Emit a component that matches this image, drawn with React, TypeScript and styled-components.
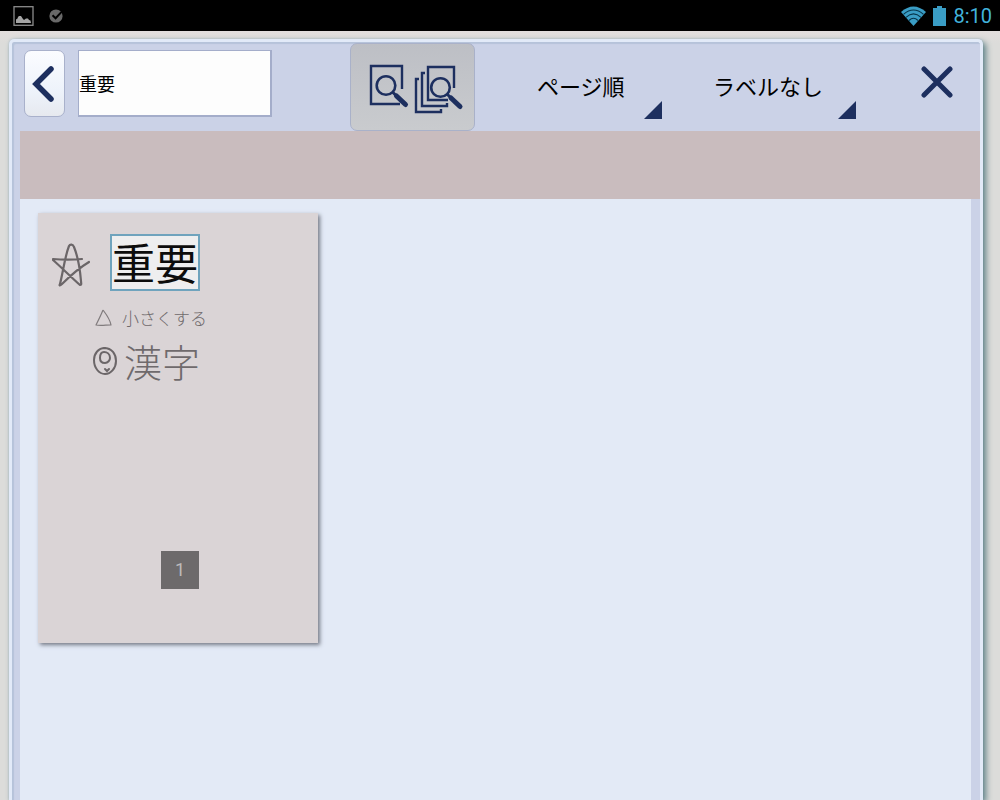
import React from "react";
import styled, { createGlobalStyle } from "styled-components";

const navy = "#1d2f5f";
const sans = `Roboto, "Noto Sans CJK JP", sans-serif`;

const GlobalStyle = createGlobalStyle`
  *, *::before, *::after { box-sizing: border-box; }
  body {
    margin: 0;
    background: #dcdcda;
    font-family: ${sans};
    color: #000;
  }
  button, input, select { font-family: inherit; color: inherit; margin: 0; }
`;

const Screen = styled.div`
  display: flex;
  flex-direction: column;
  min-height: 100vh;
  overflow: hidden;
`;

const StatusBar = styled.header`
  display: flex;
  align-items: center;
  justify-content: space-between;
  height: 31px;
  padding: 0 8px 0 13px;
  background: #000;
  color: #42b3dc;
`;

const StatusGroup = styled.div<{ $gap: number }>`
  display: flex;
  align-items: center;
  gap: ${(p) => p.$gap}px;
`;

const Clock = styled.time`
  font-size: 20px;
  line-height: 30px;
`;

const Desk = styled.main`
  flex: 1;
  display: flex;
  padding: 8px 17px 0 9px;
  background: linear-gradient(#e2dedd, #dcdcda 12px);
`;

const Frame = styled.section`
  flex: 1;
  min-width: 0;
  display: flex;
  flex-direction: column;
  border: solid #e2eaf8;
  border-width: 3px 3px 0 3px;
  border-radius: 5px 5px 0 0;
  background: #cbd2e7;
  box-shadow: 3px 3px 6px #5f8288, 0 0 2px #a9bccb, inset 2px 2px 1px #b6c3da;
`;

const Toolbar = styled.div`
  display: flex;
  align-items: flex-start;
  height: 89px;
  padding: 1px 23px 0 12px;
`;

const BackButton = styled.button`
  display: grid;
  place-items: center;
  width: 41px;
  height: 67px;
  margin: 7px 13px 0 0;
  padding: 0 4px 0 0;
  border: 1px solid #a9b1cb;
  border-radius: 7px;
  background: linear-gradient(#fbfcff, #eef3fb 60%, #e6e9ef);
`;

const SearchInput = styled.input`
  width: 194px;
  height: 67px;
  margin-top: 7px;
  padding: 0;
  border: 1px solid #a4adca;
  border-right-width: 2px;
  border-bottom-width: 2px;
  border-radius: 0;
  background: #fdfdfd;
  font-size: 18px;
  outline: none;
`;

const ScopeButton = styled.button`
  display: flex;
  align-items: center;
  justify-content: center;
  width: 125px;
  height: 88px;
  margin-left: 78px;
  padding: 2px 0 0 2px;
  border: 1px solid #a9b1c9;
  border-radius: 7px;
  background: linear-gradient(#bdbfc5, #c9cbce);
`;

const Picker = styled.label<{ $width: number; $gap: number }>`
  position: relative;
  width: ${(p) => p.$width}px;
  height: 76px;
  margin-left: ${(p) => p.$gap}px;

  &::after {
    content: "";
    position: absolute;
    right: 0;
    bottom: 0;
    width: 18px;
    height: 18px;
    background: ${navy};
    clip-path: polygon(100% 0, 100% 100%, 0 100%);
    pointer-events: none;
  }
`;

const PickerSelect = styled.select`
  appearance: none;
  width: 100%;
  height: 100%;
  padding: 13px 0 0 19px;
  border: 0;
  background: transparent;
  font-size: 22px;
  outline: none;
`;

const CloseButton = styled.button`
  margin: 19px 0 0 auto;
  padding: 4px;
  border: 0;
  background: transparent;
  line-height: 0;
`;

const LabelBand = styled.div`
  height: 68px;
  margin: 0 0 0 8px;
  background: #c9bcbe;
`;

const Results = styled.div`
  flex: 1;
  margin: 0 9px 0 8px;
  padding: 14px 18px;
  background: #e3eaf6;
`;

const PageCard = styled.article`
  position: relative;
  width: 280px;
  height: 430px;
  padding: 21px 14px;
  background: #dad4d6;
  box-shadow: 2px 2px 4px #757a86;
`;

const NoteLine = styled.div<{ $indent: number; $gap: number; $top: number }>`
  display: flex;
  align-items: center;
  gap: ${(p) => p.$gap}px;
  margin: ${(p) => p.$top}px 0 0 ${(p) => p.$indent}px;
`;

const Ink = styled.span<{ $size: number; $line: number }>`
  font-family: "Noto Sans CJK JP", sans-serif;
  font-weight: 300;
  font-size: ${(p) => p.$size}px;
  line-height: ${(p) => p.$line}px;
  color: #6f6a6c;
`;

const Match = styled.mark`
  display: block;
  width: 90px;
  height: 57px;
  border: 2px solid #6fa3bd;
  background: #eeeeef;
  color: #0c0c0c;
  font-family: "Noto Sans CJK JP", sans-serif;
  font-weight: 400;
  font-size: 43px;
  line-height: 51px;
  text-align: center;
  white-space: nowrap;
`;

const PageNumber = styled.span`
  position: absolute;
  left: 50%;
  bottom: 54px;
  width: 38px;
  margin-left: -17px;
  background: #6d6a6b;
  color: #bdbabb;
  font-size: 18px;
  line-height: 38px;
  text-align: center;
`;

export default function App() {
  return (
    <>
      <GlobalStyle />
      <Screen>
        <StatusBar>
          <StatusGroup $gap={15}>
            <svg width="21" height="20" viewBox="0 0 21 20" aria-hidden="true">
              <rect x="1" y=".7" width="19" height="18.6" fill="none" stroke="#8b8b8b" strokeWidth="1.3" />
              <path d="M3 17v-3.500l1.500-1 .5-1.500 1-1h2l2 3 1 1 2-1.500h2l1 1.500 1.500.5.5 2.500z" fill="#a5a5a5" />
            </svg>
            <svg width="14" height="14" viewBox="0 0 14 14" aria-hidden="true">
              <circle cx="7" cy="7" r="6.600" fill="#696969" />
              <path d="M3.500 6.300 6.600 9.300 12.800 2.600" fill="none" stroke="#000" strokeWidth="2" />
            </svg>
          </StatusGroup>
          <StatusGroup $gap={7}>
            <svg width="25" height="20" viewBox="0 0 25 20" aria-hidden="true">
              <path d="M0 6Q12.500-5 25 6L12.500 20z" fill="#3a9dc5" />
              <path d="M2.500 8.300Q12.500-.3 22.500 8.300M5 11.300Q12.500 4.500 20 11.300M8 14.500Q12.500 10 17 14.500" fill="none" stroke="#063449" strokeWidth="1.100" />
            </svg>
            <svg width="13" height="20" viewBox="0 0 13 20" aria-hidden="true">
              <path d="M4 0h5v2h4v18H0V2h4z" fill="#3a9dc5" />
            </svg>
            <Clock>8:10</Clock>
          </StatusGroup>
        </StatusBar>
        <Desk>
          <Frame>
            <Toolbar>
              <BackButton type="button" aria-label="戻る">
                <svg width="24" height="38" viewBox="0 0 24 38" aria-hidden="true">
                  <path d="M20 4 5 19l15 15" fill="none" stroke={navy} strokeWidth="5.500" strokeLinecap="round" />
                </svg>
              </BackButton>
              <SearchInput type="text" aria-label="検索" defaultValue="重要" />
              <ScopeButton type="button" aria-label="検索範囲">
                <svg width="102" height="52" viewBox="-2 0 102 52" fill="none" stroke={navy} aria-hidden="true">
                  <path d="M37 27V4H6v38h29" strokeWidth="2.400" />
                  <path d="M89 26V5H63v33h20M60 11h-3v33h25v-3M54 17h-3v33h25v-3" strokeWidth="2.400" />
                  <circle cx="21" cy="23.500" r="9.300" strokeWidth="2.600" />
                  <path d="m27.500 30 4 4" strokeWidth="3" />
                  <path d="m31.500 34 9 8.500" strokeWidth="5" strokeLinecap="round" />
                  <circle cx="75.500" cy="25.500" r="9.300" strokeWidth="2.600" />
                  <path d="m82 32 4 4" strokeWidth="3" />
                  <path d="m86 36 9 8.500" strokeWidth="5" strokeLinecap="round" />
                </svg>
              </ScopeButton>
              <Picker $width={144} $gap={43}>
                <PickerSelect aria-label="並べ替え">
                  <option>ページ順</option>
                </PickerSelect>
              </Picker>
              <Picker $width={162} $gap={32}>
                <PickerSelect aria-label="ラベル">
                  <option>ラベルなし</option>
                </PickerSelect>
              </Picker>
              <CloseButton type="button" aria-label="閉じる">
                <svg width="32" height="32" viewBox="0 0 32 32" aria-hidden="true">
                  <path d="m3 3 26 26M29 3 3 29" fill="none" stroke={navy} strokeWidth="5" strokeLinecap="round" />
                </svg>
              </CloseButton>
            </Toolbar>
            <LabelBand />
            <Results>
              <PageCard>
                <NoteLine $indent={0} $gap={20} $top={0}>
                  <svg width="38" height="50" viewBox="0 0 38 50" fill="none" stroke="#6b6668" strokeWidth="2.200" strokeLinecap="round" strokeLinejoin="round" aria-hidden="true">
                    <path d="M1 21c10 1 19 1 29 0M1 22c8 7 18 17 27 25 2 0 1-2 1-4-1-12-3-24-7-34-1-3-4-3-5-1C13 18 11 34 8 46c-1 2 0 2 2 0 7-7 17-16 27-22" />
                  </svg>
                  <Match>重要</Match>
                </NoteLine>
                <NoteLine $indent={43} $gap={10} $top={11}>
                  <svg width="17" height="18" viewBox="0 0 17 18" fill="none" stroke="#807b7d" strokeWidth="1.200" strokeLinejoin="round" aria-hidden="true">
                    <path d="M8 1C6 6 3 12 1 16c4 1 10 0 15 0C15 10 11 5 8 1" />
                  </svg>
                  <Ink $size={17} $line={32}>小さくする</Ink>
                </NoteLine>
                <NoteLine $indent={41} $gap={6} $top={4}>
                  <svg width="25" height="30" viewBox="0 0 25 30" fill="none" stroke="#6b6668" strokeWidth="2" strokeLinecap="round" aria-hidden="true">
                    <path d="M12 2C5 2 1 8 1 14c0 8 5 14 11 14s11-6 11-13S19 2 11 2M11 6c-4 0-4 4-4 6 0 3 2 5 5 5s5-3 5-5c0-4-3-6-6-6M12 23l2 2 2-2" />
                  </svg>
                  <Ink $size={38} $line={46}>漢字</Ink>
                </NoteLine>
                <PageNumber>1</PageNumber>
              </PageCard>
            </Results>
          </Frame>
        </Desk>
      </Screen>
    </>
  );
}
